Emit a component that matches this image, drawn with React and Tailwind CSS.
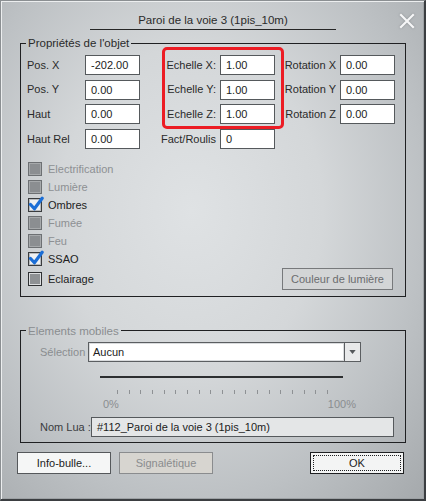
import React from 'react';

const Field = ({ value, className = 'w-[55px]' }) => (
  <div className={`h-[20px] ${className} border border-[#55595c] bg-white pl-[5px] leading-[18px] text-[#1c1c1c]`}>
    {value}
  </div>
);

const Check = ({ state, label }) => {
  let box;
  if (state === 'disabled') {
    box = <div className="h-[14px] w-[14px] border border-[#6d7073] bg-[#8b8e91] shadow-[inset_0_0_0_1px_#a6a9ab]" />;
  } else if (state === 'checked') {
    box = (
      <div className="relative h-[14px] w-[14px] border border-[#3a3c3e] bg-[#eef0f2] shadow-[inset_0_0_0_1px_#b9bcbf]">
        <svg viewBox="0 0 14 14" className="absolute -left-px -top-[3px] h-[16px] w-[16px]">
          <path d="M2.2 7.4 L5.6 11.2 L12.4 2" fill="none" stroke="#1b6ed6" strokeWidth="2.8" strokeLinecap="round" strokeLinejoin="round" />
        </svg>
      </div>
    );
  } else {
    box = <div className="h-[14px] w-[14px] border border-[#2f3133] bg-[#8e9194] shadow-[inset_0_0_0_1px_#dcdee0]" />;
  }
  return (
    <div className="flex h-[18px] items-center gap-[6px]">
      {box}
      <span className={state === 'disabled' ? 'text-[#8d9093]' : 'text-[#222]'}>{label}</span>
    </div>
  );
};

export default function App() {
  const ticks = Array.from({ length: 19 });
  return (
    <div className="relative h-[501px] w-[426px] border-l border-t border-r-2 border-b-2 border-l-[#8b8f92] border-t-[#8b8f92] border-r-[#3b3e41] border-b-[#3b3e41] bg-[radial-gradient(ellipse_at_45%_42%,#dfe2e4_0%,#d4d7d9_40%,#bcc0c3_72%,#a5a9ac_100%)] shadow-[inset_1px_1px_0_#eceeef,inset_-1px_-1px_0_#9da1a4] font-['Liberation_Sans',Arial,sans-serif] text-[11px] text-[#2a2a2a]">
      {/* title */}
      <div className="pt-[11px]">
        <div className="ml-[89px] w-[246px] border-b border-[#262626] text-center text-[11.5px] leading-[17px] text-[#2a2a2a]">
          Paroi de la voie 3 (1pis_10m)
        </div>
      </div>
      <svg viewBox="0 0 16 16" className="absolute left-[398px] top-[12px] h-[16px] w-[16px] drop-shadow-[0_0_1px_#8a8e91]">
        <path d="M2 2 L14 14 M14 2 L2 14" stroke="#f6f7f8" strokeWidth="2.2" strokeLinecap="square" />
      </svg>

      {/* Propriétés */}
      <fieldset className="ml-[19px] mt-[5px] w-[386px] border border-[#1f2022] p-0">
        <legend className="ml-[5px] px-[2px] text-[11.5px] leading-[16px]">Propriétés de l'objet</legend>
        <div className="relative mt-[4px] grid grid-cols-[58px_55px_80px_55px_65px_55px] gap-y-[4.67px] pl-[6px]">
          <div className="flex items-center">Pos. X</div>
          <Field value="-202.00" />
          <div className="flex items-center justify-end pr-[4px]">Echelle X:</div>
          <Field value="1.00" />
          <div className="flex items-center justify-end pr-[4px]">Rotation X</div>
          <Field value="0.00" />

          <div className="flex items-center">Pos. Y</div>
          <Field value="0.00" />
          <div className="flex items-center justify-end pr-[4px]">Echelle Y:</div>
          <Field value="1.00" />
          <div className="flex items-center justify-end pr-[4px]">Rotation Y</div>
          <Field value="0.00" />

          <div className="flex items-center">Haut</div>
          <Field value="0.00" />
          <div className="flex items-center justify-end pr-[4px]">Echelle Z:</div>
          <Field value="1.00" />
          <div className="flex items-center justify-end pr-[4px]">Rotation Z</div>
          <Field value="0.00" />

          <div className="flex items-center">Haut Rel</div>
          <Field value="0.00" />
          <div className="flex items-center justify-end pr-[4px]">Fact/Roulis</div>
          <Field value="0" />
          <div />
          <div />

          <div className="absolute left-[141px] top-[-8px] h-[82px] w-[122px] rounded-[5px] border-[3px] border-[#ec1c24]" />
        </div>

        <div className="mt-[11px] flex flex-col pl-[7px] pr-[12px] pb-[6px]">
          <Check state="disabled" label="Electrification" />
          <Check state="disabled" label="Lumière" />
          <Check state="checked" label="Ombres" />
          <Check state="disabled" label="Fumée" />
          <Check state="disabled" label="Feu" />
          <Check state="checked" label="SSAO" />
          <div className="flex items-center justify-between">
            <Check state="unchecked" label="Eclairage" />
            <div className="flex h-[22px] w-[111px] items-center justify-center border border-[#77797b] bg-[#d3d5d6] text-[#6b6d6f]">
              Couleur de lumière
            </div>
          </div>
        </div>
      </fieldset>

      {/* Elements mobiles */}
      <fieldset className="ml-[19px] mt-[26px] w-[386px] border border-[#1f2022] p-0">
        <legend className="ml-[5px] px-[2px] text-[11.5px] leading-[16px] text-[#8a8d90]">Elements mobiles</legend>
        <div className="mt-[3px] flex items-center pl-[19px]">
          <span className="w-[48px] whitespace-nowrap text-[#8a8d90]">Sélection</span>
          <div className="flex h-[20px] w-[273px] border border-[#5b5e61] bg-white">
            <div className="flex-1 border border-[#d9dbdd] pl-[3px] leading-[16px] text-[#1c1c1c]">Aucun</div>
            <div className="flex w-[16px] items-center justify-center border-l border-[#5b5e61] bg-[#e8e9ea]">
              <svg viewBox="0 0 8 5" className="h-[4px] w-[7px]">
                <path d="M0 0 L8 0 L4 5 Z" fill="#55585b" />
              </svg>
            </div>
          </div>
        </div>
        <div className="ml-[79px] mt-[14px] h-[2px] w-[243px] bg-[#2c2e30]" />
        <div className="ml-[96px] mt-[12px] flex w-[211px] justify-between">
          {ticks.map((_, i) => (
            <div key={i} className="h-[4px] w-px bg-[#8e9194]" />
          ))}
        </div>
        <div className="ml-[82px] mt-[3px] flex w-[253px] justify-between leading-[14px] text-[#8a8d90]">
          <span>0%</span>
          <span>100%</span>
        </div>
        <div className="mt-[6px] flex items-center pb-[5px] pl-[19px]">
          <span className="w-[51px] whitespace-nowrap text-[#3a3c3e]">Nom Lua :</span>
          <div className="h-[20px] w-[303px] border border-[#55595c] bg-[#e4e6e7] pl-[5px] leading-[18px] text-[#1c1c1c]">
            #112_Paroi de la voie 3 (1pis_10m)
          </div>
        </div>
      </fieldset>

      {/* buttons */}
      <div className="mt-[9px] flex pl-[16px] pr-[20px]">
        <div className="flex h-[22px] w-[94px] items-center justify-center border border-[#55585b] bg-[#f5f6f6] text-[#1c1c1c]">Info-bulle...</div>
        <div className="ml-[8px] flex h-[22px] w-[94px] items-center justify-center border border-[#8a8c8e] bg-[#d7d5d0] text-[#8a8c8e]">Signalétique</div>
        <div className="ml-auto flex h-[22px] w-[94px] items-center justify-center border border-[#1f2022] bg-[#f3f4f4] p-[2px]">
          <div className="flex h-full w-full items-center justify-center border border-dotted border-[#1f2022] text-[#1c1c1c]">OK</div>
        </div>
      </div>
    </div>
  );
}
